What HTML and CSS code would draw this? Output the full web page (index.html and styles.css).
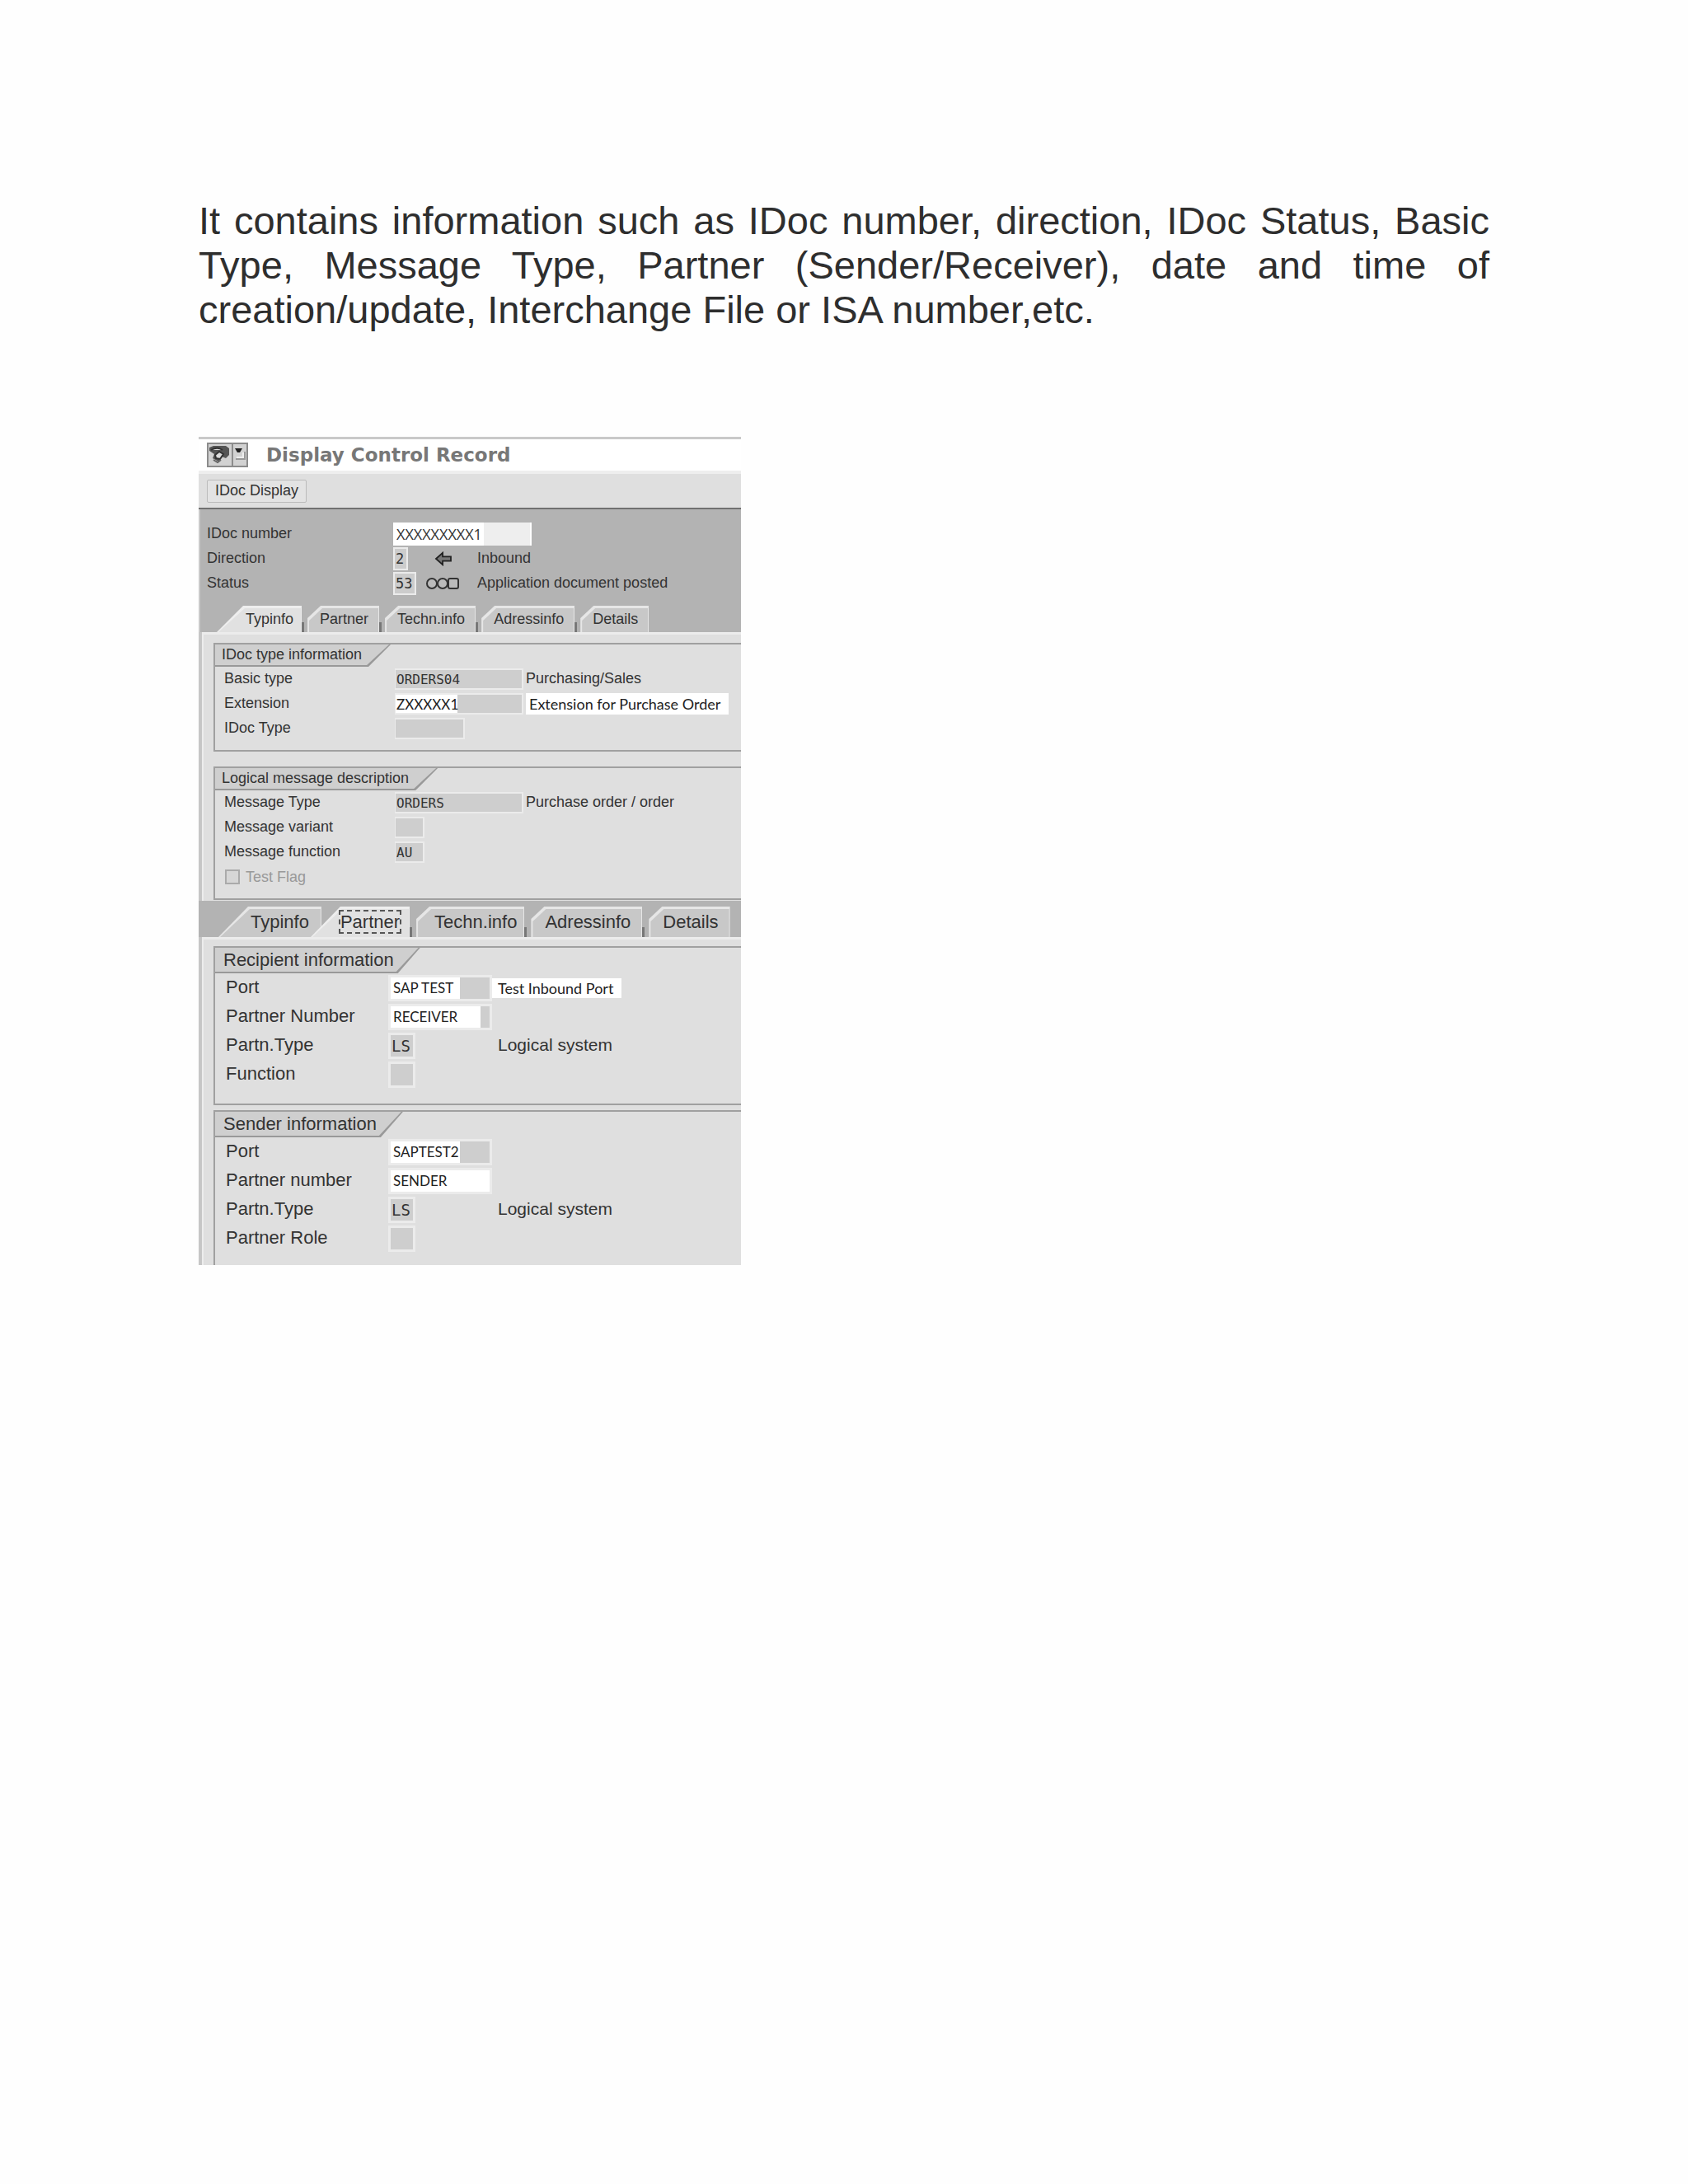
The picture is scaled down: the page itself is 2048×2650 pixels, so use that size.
FILE: index.html
```html
<!DOCTYPE html>
<html lang="en">
<head>
    <meta charset="UTF-8">
    <meta name="viewport" content="width=device-width, initial-scale=1.0">
    <title>IDoc Control Record</title>
    <link rel="stylesheet" href="styles.css">
</head>
<body>
<main class="page">
    <p class="intro">It contains information such as IDoc number, direction, IDoc Status, Basic Type, Message Type, Partner (Sender/Receiver), date and time of creation/update, Interchange File or ISA number,etc.</p>

    <section class="record">
        <header class="title-bar">
            <svg class="title-icon" width="50" height="30" viewBox="0 0 50 30">
                <rect x="1" y="1" width="48" height="28" fill="#d2d2d2" stroke="#8c8c8c" stroke-width="2"/>
                <path d="M31 1v28" stroke="#8c8c8c" stroke-width="2"/>
                <path d="M3 6l5-2h15l4 3v8l-4 4-5-2-4 6-7-4 2-5-6-4z" fill="#555"/>
                <path d="M5 9c5-3 10-3 14 0M10 15l5-4 5 3-4 6-5-1z" fill="#ddd" stroke="#333" stroke-width="2"/>
                <path d="M8 21l5 3 4-3" fill="none" stroke="#666" stroke-width="2"/>
                <path d="M34 7h9l-3 5h-3z" fill="#222"/>
                <path d="M35 20h11v-9" fill="none" stroke="#999" stroke-width="2"/>
                <path d="M36 18h8v-6" fill="none" stroke="#eee" stroke-width="2"/>
            </svg>
            <h1>Display Control Record</h1>
        </header>
        <div class="toolbar">
            <button type="button" class="tool-button">IDoc Display</button>
        </div>

        <div class="head">
            <div class="head-row">
                <label for="idoc-number">IDoc number</label>
                <input id="idoc-number" class="number-field" type="text" value="XXXXXXXXX1" readonly>
            </div>
            <div class="head-row">
                <label for="direction">Direction</label>
                <div class="code">
                    <input id="direction" class="code-field one" type="text" value="2" readonly>
                    <svg class="arrow" width="22" height="18" viewBox="0 0 24 20">
                        <path d="M2 10l9-8v5h11v6H11v5z" fill="#777" stroke="#222" stroke-width="2"/>
                    </svg>
                </div>
                <span>Inbound</span>
            </div>
            <div class="head-row">
                <label for="status">Status</label>
                <div class="code">
                    <input id="status" class="code-field two" type="text" value="53" readonly>
                    <svg class="lights" width="42" height="16" viewBox="0 0 42 16">
                        <g fill="#bbb" stroke="#333" stroke-width="2">
                            <rect x="28" y="2" width="12" height="12" rx="2"/>
                            <circle cx="8" cy="8" r="6"/>
                            <circle cx="21" cy="8" r="6"/>
                        </g>
                    </svg>
                </div>
                <span>Application document posted</span>
            </div>
            <nav class="tabs">
                <button type="button" class="tab first active">Typinfo</button>
                <button type="button" class="tab">Partner</button>
                <button type="button" class="tab">Techn.info</button>
                <button type="button" class="tab">Adressinfo</button>
                <button type="button" class="tab last">Details</button>
            </nav>
        </div>

        <div class="panel">
            <section class="group">
                <h2>IDoc type information</h2>
                <div class="row">
                    <label for="basic-type">Basic type</label>
                    <input id="basic-type" class="field long" type="text" value="ORDERS04" readonly>
                    <span>Purchasing/Sales</span>
                </div>
                <div class="row">
                    <label for="extension">Extension</label>
                    <input id="extension" class="field long edited" type="text" value="ZXXXXX1" readonly>
                    <span class="note">Extension for Purchase Order</span>
                </div>
                <div class="row">
                    <label for="idoc-type">IDoc Type</label>
                    <input id="idoc-type" class="field medium" type="text" readonly>
                </div>
            </section>
            <section class="group">
                <h2>Logical message description</h2>
                <div class="row">
                    <label for="message-type">Message Type</label>
                    <input id="message-type" class="field long" type="text" value="ORDERS" readonly>
                    <span>Purchase order / order</span>
                </div>
                <div class="row">
                    <label for="message-variant">Message variant</label>
                    <input id="message-variant" class="field short" type="text" readonly>
                </div>
                <div class="row">
                    <label for="message-function">Message function</label>
                    <input id="message-function" class="field short" type="text" value="AU" readonly>
                </div>
                <div class="check-row">
                    <input id="test-flag" type="checkbox" disabled>
                    <label for="test-flag">Test Flag</label>
                </div>
            </section>
        </div>

        <div class="large">
            <nav class="tabs">
                <button type="button" class="tab first">Typinfo</button>
                <button type="button" class="tab active"><span class="focus">Partner</span></button>
                <button type="button" class="tab wide">Techn.info</button>
                <button type="button" class="tab">Adressinfo</button>
                <button type="button" class="tab last">Details</button>
            </nav>
            <div class="panel">
                <section class="group">
                    <h2>Recipient information</h2>
                    <div class="row">
                        <label for="recipient-port">Port</label>
                        <input id="recipient-port" class="field long edited" type="text" value="SAP TEST" readonly>
                        <span class="note">Test Inbound Port</span>
                    </div>
                    <div class="row">
                        <label for="recipient-number">Partner Number</label>
                        <input id="recipient-number" class="field long edited wider" type="text" value="RECEIVER" readonly>
                    </div>
                    <div class="row">
                        <label for="recipient-type">Partn.Type</label>
                        <input id="recipient-type" class="field short" type="text" value="LS" readonly>
                        <span>Logical system</span>
                    </div>
                    <div class="row">
                        <label for="recipient-function">Function</label>
                        <input id="recipient-function" class="field short" type="text" readonly>
                    </div>
                </section>
                <section class="group open">
                    <h2>Sender information</h2>
                    <div class="row">
                        <label for="sender-port">Port</label>
                        <input id="sender-port" class="field long edited" type="text" value="SAPTEST2" readonly>
                    </div>
                    <div class="row">
                        <label for="sender-number">Partner number</label>
                        <input id="sender-number" class="field long edited full" type="text" value="SENDER" readonly>
                    </div>
                    <div class="row">
                        <label for="sender-type">Partn.Type</label>
                        <input id="sender-type" class="field short" type="text" value="LS" readonly>
                        <span>Logical system</span>
                    </div>
                    <div class="row">
                        <label for="sender-role">Partner Role</label>
                        <input id="sender-role" class="field short" type="text" readonly>
                    </div>
                </section>
            </div>
        </div>
    </section>
</main>
</body>
</html>
```

FILE: styles.css
```css
* {
    box-sizing: border-box;
    margin: 0;
    padding: 0;
}

body {
    font-family: "Liberation Sans", Arial, sans-serif;
    background: #fefefe;
    color: #2e2e2e;
}

.page {
    padding: 241px 241px 120px;
}

.intro {
    font-size: 47px;
    line-height: 54px;
    text-align: justify;
    margin-bottom: 127px;
}

.record {
    width: 42%;
    min-width: 658px;
    font-size: 18px;
    color: #333;
    background: #dfdfdf;
}

input,
button {
    font-family: inherit;
    font-size: inherit;
    color: inherit;
    border: none;
}

/* title and toolbar */

.title-bar {
    display: flex;
    align-items: center;
    gap: 22px;
    height: 41px;
    padding-left: 10px;
    background: #fff;
    border-top: 3px solid #c9c9c9;
}

.title-bar h1 {
    font-family: "DejaVu Sans", sans-serif;
    font-size: 23px;
    line-height: 32px;
    font-weight: bold;
    color: #777;
}

.toolbar {
    display: flex;
    align-items: center;
    height: 47px;
    padding-left: 10px;
    border-top: 4px solid #eee;
    border-bottom: 2px solid #707070;
}

.tool-button {
    height: 28px;
    padding: 0 9px;
    background: #e3e3e3;
    border: 1px solid #bbb;
    border-radius: 2px;
}

/* record header */

.head {
    padding-top: 15px;
    background: #b3b3b3;
    border-left: 2px solid #c9c9c9;
}

.head-row {
    display: grid;
    grid-template-columns: 226px 102px 1fr;
    align-items: center;
    height: 30px;
    padding-left: 8px;
}

.head-row label,
.head-row span,
.row label,
.row span {
    padding-bottom: 2px;
}

.number-field {
    width: 168px;
    height: 28px;
    padding-left: 4px;
    font-family: "Open Sans", sans-serif;
    font-size: 18px;
    background: linear-gradient(90deg, #fff 110px, #eee 110px);
    border-right: 2px solid #fff;
}

.code {
    display: flex;
    align-items: center;
}

.code-field {
    height: 28px;
    padding-left: 1px;
    font-family: "DejaVu Sans Mono", monospace;
    font-size: 17px;
    background: #ccc;
    border: 2px solid #ebebeb;
}

.one {
    width: 18px;
}

.two {
    width: 28px;
}

.arrow {
    margin-left: 32px;
}

.lights {
    margin-left: 11px;
}

/* tabs */

.tabs {
    display: flex;
    height: 32px;
    margin-top: 12px;
    padding-left: 20px;
    gap: 4px;
}

.tab {
    position: relative;
    z-index: 0;
    padding: 0 16px 0 15px;
    background: linear-gradient(#777, #777) right bottom / 4px 12px no-repeat;
    --slope: polygon(0 100%, 0 15px, 16px 0, 100% 0, 100% 100%);
}

.tab::before,
.tab::after {
    content: "";
    position: absolute;
    z-index: -1;
    inset: 0 3px 0 0;
    background: #e6e6e6;
    clip-path: var(--slope);
}

.tab::after {
    inset: 3px 4px 0 2px;
    background: #c8c8c8;
}

.first {
    padding: 0 13px 0 35px;
    --slope: polygon(0 100%, 32px 0, 100% 0, 100% 100%);
}

.last {
    background: none;
}

.tab.active::before {
    background: #eee;
}

.tab.active::after {
    background: #e1e1e1;
}

/* panels */

.panel {
    padding: 13px 0 1px 14px;
    border-left: 4px solid #c6c6c6;
    box-shadow: inset 2px 3px #ececec;
}

.group {
    padding-bottom: 11px;
    border: 2px solid #a0a0a0;
    border-right: none;
}

.group + .group {
    margin-top: 18px;
}

.group h2 {
    position: relative;
    z-index: 0;
    width: fit-content;
    height: 27px;
    padding: 0 35px 0 8px;
    font-size: 18px;
    line-height: 25px;
    font-weight: normal;
}

.group h2::before,
.group h2::after {
    content: "";
    position: absolute;
    z-index: -1;
    inset: 0;
    background: #999;
    clip-path: polygon(0 0, 100% 0, calc(100% - 27px) 100%, 0 100%);
}

.group h2::after {
    inset: 0 2px 2px 0;
    background: #cfcfcf;
}

.row {
    display: grid;
    grid-template-columns: 207px 159px 1fr;
    align-items: center;
    height: 30px;
    padding-left: 11px;
}

.field {
    height: 26px;
    padding-left: 1px;
    font-family: "DejaVu Sans Mono", monospace;
    font-size: 16px;
    background: #cecece;
    border: 2px solid #ebebeb;
    border-left-width: 1px;
}

.long {
    width: 156px;
}

.medium {
    width: 85px;
}

.short {
    width: 36px;
}

.edited {
    font-family: Lato, sans-serif;
    font-size: 17px;
    color: #222;
    background: linear-gradient(90deg, #fff 75px, #cecece 75px);
}

.row .note {
    width: fit-content;
    padding: 0 10px 0 4px;
    font-family: Lato, sans-serif;
    font-size: 18px;
    line-height: 26px;
    color: #222;
    background: #fff;
}

.check-row {
    display: flex;
    align-items: center;
    gap: 7px;
    height: 30px;
    padding-left: 12px;
    color: #999;
}

.check-row input {
    appearance: none;
    width: 18px;
    height: 18px;
    background: #d6d6d6;
    border: 2px solid #aaa;
}

/* partner view, drawn at a larger size */

.large {
    font-size: 22px;
    background: #b3b3b3;
}

.large .tabs {
    height: 44px;
    margin-top: 0;
    padding: 7px 0 0 24px;
    gap: 5px;
}

.large .tab {
    padding: 0 17px;
}

.large .wide {
    padding: 0 12px 0 22px;
}

.large .first {
    padding: 0 18px 0 39px;
    --slope: polygon(0 100%, 36px 0, 100% 0, 100% 100%);
}

.large .active {
    margin-left: -21px;
    padding: 0 15px 0 36px;
    --slope: polygon(0 100%, 36px 0, 100% 0, 100% 100%);
}

.focus {
    outline: 2px dashed #555;
}

.large .panel {
    padding: 11px 0 0 14px;
    background: #dfdfdf;
}

.large .group {
    padding-bottom: 18px;
}

.large .group + .group {
    margin-top: 6px;
}

.large .open {
    padding-bottom: 15px;
    border-bottom: none;
}

.large .group h2 {
    height: 31px;
    padding: 0 32px 0 10px;
    font-size: 22px;
    line-height: 29px;
}

.large .row {
    grid-template-columns: 197px 126px 1fr;
    height: 35px;
    padding-left: 13px;
}

.large .row span {
    padding-left: 7px;
    font-size: 21px;
}

.large .field {
    height: 32px;
    font-size: 19px;
    border-width: 3px;
}

.large .long {
    width: 126px;
}

.large .short {
    width: 33px;
}

.large .edited {
    padding-left: 3px;
    font-size: 17px;
    background: linear-gradient(90deg, #fff 84px, #cecece 84px);
}

.large .wider {
    background: linear-gradient(90deg, #fff 109px, #cecece 109px);
}

.large .full {
    background: #fff;
}

.large .row .note {
    padding-bottom: 0;
    font-size: 18px;
    line-height: 24px;
}
```
